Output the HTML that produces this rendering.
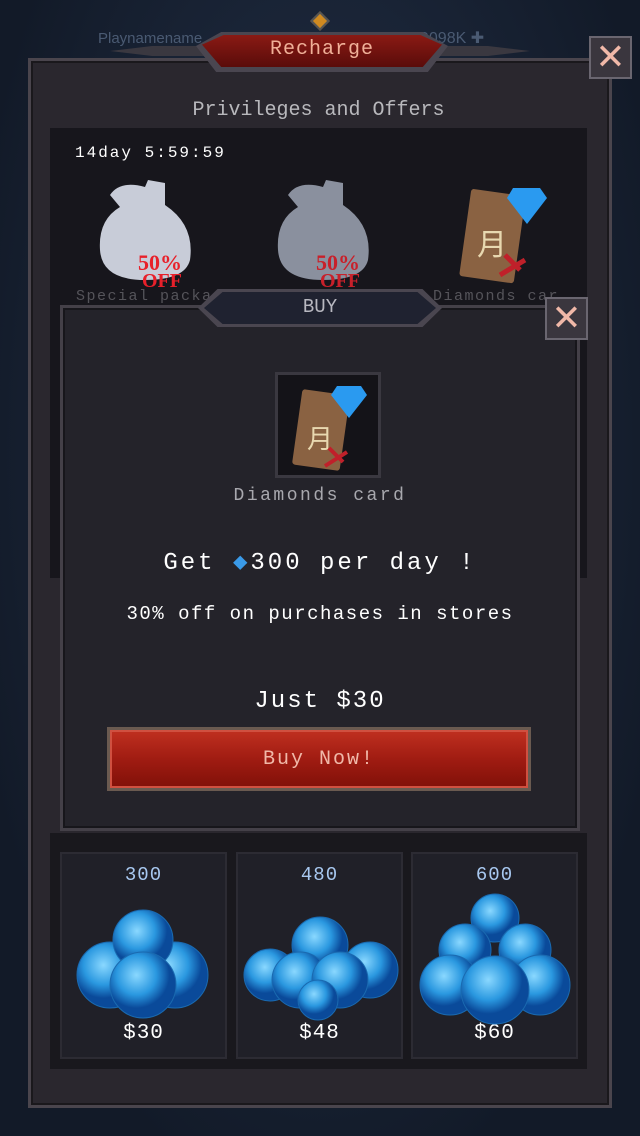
<!DOCTYPE html>
<html><head><meta charset="utf-8"><style>
*{margin:0;padding:0;box-sizing:border-box}
body{width:640px;height:1136px;overflow:hidden;background:radial-gradient(ellipse at 50% 40%,#24324a,#121a28 80%);font-family:"Liberation Mono","DejaVu Sans Mono",monospace;position:relative;color:#fff}
.a{position:absolute}
.t{position:absolute;text-align:center;white-space:nowrap}
</style></head><body>
<div class="t" style="left:98px;top:30px;font:15px 'Liberation Sans',sans-serif;color:#4a5a72">Playnamename</div>
<div class="t" style="left:420px;top:28px;font:16px 'Liberation Sans',sans-serif;color:#4a5a72">9098K ✚</div>
<!-- outer panel -->
<div class="a" style="left:28px;top:58px;width:584px;height:1050px;background:#2a272e;border:3px solid #4a454d;box-shadow:inset 0 0 0 2px #1a181c"></div>
<div class="a" style="left:50px;top:128px;width:537px;height:450px;background:#17161c"></div>
<div class="a" style="left:50px;top:833px;width:537px;height:236px;background:#19181d"></div>
<!-- header -->
<div class="a" style="left:110px;top:46px;width:420px;height:10px;background:#3a3840;clip-path:polygon(0 50%,10% 0,90% 0,100% 50%,90% 100%,10% 100%)"></div>
<div class="a" style="left:196px;top:32px;width:252px;height:40px;background:#4a4650;clip-path:polygon(0 35%,10% 0,90% 0,100% 35%,92% 100%,8% 100%)"></div>
<div class="a" style="left:202px;top:35px;width:240px;height:32px;background:linear-gradient(#8a1a14,#5a0c0a);clip-path:polygon(0 30%,9% 0,91% 0,100% 30%,92% 100%,8% 100%)"></div>
<div class="a" style="left:313px;top:14px;width:14px;height:14px;background:#d08a20;transform:rotate(45deg);border:2px solid #555"></div>
<div class="t" style="left:202px;width:240px;top:38px;font-size:20px;color:#f0b098;letter-spacing:1px">Recharge</div>
<!-- close -->
<div class="a" style="left:589px;top:36px;width:43px;height:43px;background:#3a363e;border:2px solid #6a6670;color:#f0b8a8;font:36px/38px 'Liberation Sans',sans-serif;text-align:center">✕</div>
<div class="t" style="left:50px;width:537px;top:99px;font-size:20px;color:#b8b8bc;letter-spacing:0px">Privileges and Offers</div>
<div class="t" style="left:75px;top:144px;font-size:16px;color:#fff;letter-spacing:2px">14day 5:59:59</div>
<!-- bags -->
<svg class="a" style="left:90px;top:175px" width="120" height="115"><path d="M20 20 Q30 5 55 12 L58 5 L75 8 L75 30 Q105 50 100 85 Q95 105 55 105 Q12 105 10 75 Q8 45 30 32 Z" fill="#c8ccd8"/><text x="48" y="95" font-family="Liberation Serif" font-weight="bold" font-size="22" fill="#e8202a">50%</text><text x="52" y="112" font-family="Liberation Serif" font-weight="bold" font-size="20" fill="#e8202a">OFF</text></svg>
<svg class="a" style="left:268px;top:175px" width="120" height="115"><path d="M20 20 Q30 5 55 12 L58 5 L75 8 L75 30 Q105 50 100 85 Q95 105 55 105 Q12 105 10 75 Q8 45 30 32 Z" fill="#8a909e"/><text x="48" y="95" font-family="Liberation Serif" font-weight="bold" font-size="22" fill="#c8202a">50%</text><text x="52" y="112" font-family="Liberation Serif" font-weight="bold" font-size="20" fill="#c8202a">OFF</text></svg>
<svg class="a" style="left:455px;top:180px" width="100" height="110"><rect x="10" y="12" width="55" height="88" rx="3" fill="#8a6242" transform="rotate(8 37 56)"/><text x="22" y="75" font-size="30" fill="#e8d8b0" font-family="Noto Sans CJK SC">月</text><polygon points="58,8 85,8 92,18 72,44 52,18" fill="#2a9af0"/><path d="M50 75 L65 90 M45 95 L70 80" stroke="#c0202a" stroke-width="5"/></svg>
<div class="t" style="left:76px;top:288px;font-size:15px;color:#55545a;letter-spacing:1.5px">Special packa</div>
<div class="t" style="left:433px;top:288px;font-size:15px;color:#55545a;letter-spacing:1.5px">Diamonds car</div>
<!-- BUY modal -->
<div class="a" style="left:60px;top:305px;width:520px;height:526px;background:#24232a;border:3px solid #444048;box-shadow:inset 0 0 0 2px #17161b"></div>
<div class="a" style="left:198px;top:289px;width:244px;height:38px;background:#4a4650;clip-path:polygon(0 50%,8% 0,92% 0,100% 50%,92% 100%,8% 100%)"></div>
<div class="a" style="left:204px;top:292px;width:232px;height:32px;background:#1f2230;clip-path:polygon(0 50%,8% 0,92% 0,100% 50%,92% 100%,8% 100%)"></div>
<div class="t" style="left:204px;width:232px;top:296px;font-size:19px;color:#b8b8c0">BUY</div>
<div class="a" style="left:545px;top:297px;width:43px;height:43px;background:#3a363e;border:2px solid #6a6670;color:#f0b8a8;font:36px/38px 'Liberation Sans',sans-serif;text-align:center">✕</div>
<div class="a" style="left:275px;top:372px;width:106px;height:106px;background:#141318;border:3px solid #3a3840"></div>
<svg class="a" style="left:285px;top:380px" width="90" height="95"><rect x="12" y="12" width="48" height="76" rx="3" fill="#8a6242" transform="rotate(8 36 50)"/><text x="22" y="68" font-size="26" fill="#e8d8b0" font-family="Noto Sans CJK SC">月</text><polygon points="52,6 76,6 82,15 64,38 46,15" fill="#2a9af0"/><path d="M44 68 L58 82 M40 86 L62 72" stroke="#c0202a" stroke-width="4"/></svg>
<div class="t" style="left:60px;width:520px;top:486px;font-size:18px;color:#a8a8ae;letter-spacing:2.5px">Diamonds card</div>
<div class="t" style="left:60px;width:520px;top:547px;font-size:24px;color:#fff;letter-spacing:3px">Get <span style="color:#3a9ae8">◆</span>300 per day !</div>
<div class="t" style="left:60px;width:520px;top:603px;font-size:19px;color:#fff;letter-spacing:1.5px">30% off on purchases in stores</div>
<div class="t" style="left:60px;width:520px;top:688px;font-size:24px;color:#fff;letter-spacing:2px">Just $30</div>
<div class="a" style="left:107px;top:727px;width:424px;height:64px;background:linear-gradient(#c03020,#a01c12 50%,#801008);border:3px solid #6a5a50;box-shadow:inset 0 0 0 2px #d05040"></div>
<div class="t" style="left:107px;width:424px;top:748px;font-size:20px;color:#f0b8a8;letter-spacing:2px">Buy Now!</div>
<!-- cards -->
<div class="a" style="left:60px;top:852px;width:167px;height:207px;background:#202028;border:2px solid #2c2b33"></div>
<div class="a" style="left:236px;top:852px;width:167px;height:207px;background:#202028;border:2px solid #2c2b33"></div>
<div class="a" style="left:411px;top:852px;width:167px;height:207px;background:#202028;border:2px solid #2c2b33"></div>
<div class="t" style="left:60px;width:167px;top:864px;font-size:19px;color:#a8c8f0;letter-spacing:1px">300</div>
<div class="t" style="left:236px;width:167px;top:864px;font-size:19px;color:#a8c8f0;letter-spacing:1px">480</div>
<div class="t" style="left:411px;width:167px;top:864px;font-size:19px;color:#a8c8f0;letter-spacing:1px">600</div>
<div class="t" style="left:60px;width:167px;top:1022px;font-size:21px;color:#fff;letter-spacing:1px">$30</div>
<div class="t" style="left:236px;width:167px;top:1022px;font-size:21px;color:#fff;letter-spacing:1px">$48</div>
<div class="t" style="left:411px;width:167px;top:1022px;font-size:21px;color:#fff;letter-spacing:1px">$60</div>
<svg class="a" style="left:0;top:0" width="0" height="0"><defs><radialGradient id="g" cx="40%" cy="35%"><stop offset="0" stop-color="#8ad8ff"/><stop offset="0.6" stop-color="#2a98e0"/><stop offset="1" stop-color="#0a4a9a"/></radialGradient></defs></svg>
<svg class="a" style="left:70px;top:900px" width="150" height="125"><g fill="url(#g)" stroke="#1a6ab0"><circle cx="40" cy="75" r="33"/><circle cx="105" cy="75" r="33"/><circle cx="73" cy="40" r="30"/><circle cx="73" cy="85" r="33"/></g></svg>
<svg class="a" style="left:240px;top:905px" width="160" height="120"><g fill="url(#g)" stroke="#1a6ab0"><circle cx="30" cy="70" r="26"/><circle cx="130" cy="65" r="28"/><circle cx="80" cy="40" r="28"/><circle cx="60" cy="75" r="28"/><circle cx="100" cy="75" r="28"/><circle cx="78" cy="95" r="20"/></g></svg>
<svg class="a" style="left:415px;top:890px" width="160" height="140"><g fill="url(#g)" stroke="#1a6ab0"><circle cx="80" cy="28" r="24"/><circle cx="50" cy="60" r="26"/><circle cx="110" cy="60" r="26"/><circle cx="35" cy="95" r="30"/><circle cx="125" cy="95" r="30"/><circle cx="80" cy="100" r="34"/></g></svg>
</body></html>
